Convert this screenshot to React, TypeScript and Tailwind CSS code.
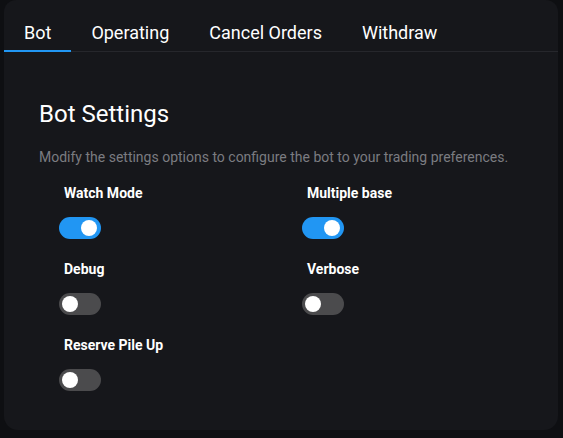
import React, { useState } from "react";

const tabs = ["Bot", "Operating", "Cancel Orders", "Withdraw"];

type Setting = { key: string; label: string };

const settings: Setting[] = [
  { key: "watch", label: "Watch Mode" },
  { key: "multiple", label: "Multiple base" },
  { key: "debug", label: "Debug" },
  { key: "verbose", label: "Verbose" },
  { key: "reserve", label: "Reserve Pile Up" },
];

function Toggle({ on, onClick }: { on: boolean; onClick: () => void }) {
  return (
    <button
      onClick={onClick}
      className={
        "relative block w-[42px] h-[22px] rounded-full transition-colors " +
        (on ? "bg-[#2196f3]" : "bg-[#4b4b4d]")
      }
    >
      <span
        className={
          "absolute top-[3px] w-[16px] h-[16px] rounded-full bg-white transition-all " +
          (on ? "left-[22px]" : "left-[3px]")
        }
      />
    </button>
  );
}

export default function App() {
  const [active, setActive] = useState(0);
  const [values, setValues] = useState<Record<string, boolean>>({
    watch: true,
    multiple: true,
    debug: false,
    verbose: false,
    reserve: false,
  });

  return (
    <div
      className="w-[563px] h-[438px] bg-[#0e0f12] pl-[4px] pr-[5px] pb-[8px]"
      style={{ fontFamily: "Roboto, 'Liberation Sans', sans-serif" }}
    >
      <div className="h-full bg-[#16171b] rounded-b-[14px] rounded-t-[12px] overflow-hidden">
        <div className="flex border-b border-[#26272c] h-[52px]">
          {tabs.map((t, i) => (
            <button
              key={t}
              onClick={() => setActive(i)}
              className={
                "px-[20px] pt-[14px] text-[18px] text-white border-b-2 -mb-px " +
                (active === i ? "border-[#2196f3]" : "border-transparent")
              }
            >
              {t}
            </button>
          ))}
        </div>

        <div className="pl-[35px] pt-[46px]">
          <h2 className="text-[24px] text-white leading-[32px]">Bot Settings</h2>
          <p className="mt-[17px] text-[14px] text-[#7b7c81] leading-[20px]">
            Modify the settings options to configure the bot to your trading preferences.
          </p>
          <div className="grid grid-cols-[243px_243px] pl-[20px] mt-[16px] gap-y-[20px]">
            {settings.map((s) => (
              <div key={s.key} className="flex flex-col">
                <span className="pl-[5px] text-[14px] font-bold text-white leading-[20px]">
                  {s.label}
                </span>
                <div className="mt-[14px] flex">
                  <Toggle
                    on={values[s.key]}
                    onClick={() => setValues((v) => ({ ...v, [s.key]: !v[s.key] }))}
                  />
                </div>
              </div>
            ))}
          </div>
        </div>
      </div>
    </div>
  );
}
